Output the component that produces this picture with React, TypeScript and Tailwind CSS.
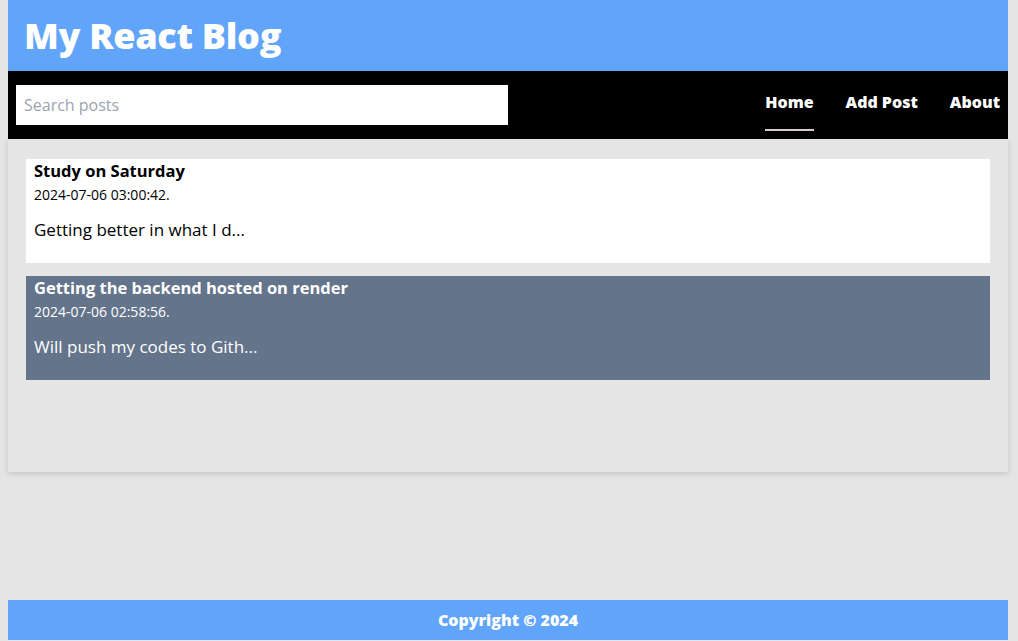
export default function App() {
  const posts = [
    { title: "Study on Saturday", date: "2024-07-06 03:00:42.", body: "Getting better in what I d...", dark: false },
    { title: "Getting the backend hosted on render", date: "2024-07-06 02:58:56.", body: "Will push my codes to Gith...", dark: true },
  ];
  return (
    <div className="h-[641px] bg-[#e5e5e5] pl-2 pr-[10px] flex flex-col" style={{ fontFamily: '"Open Sans", sans-serif' }}>
      <header className="h-[71px] bg-[#60a5fa] flex items-center px-4">
        <h1 className="text-[36px] font-extrabold text-white leading-none tracking-[-0.3px]">My React Blog</h1>
      </header>
      <nav className="h-[68px] bg-black flex items-center justify-between pl-2 pr-2">
        <input
          className="w-[492px] h-10 bg-white px-2 text-[16px] outline-none placeholder:text-[#9ca3af]"
          placeholder="Search posts"
        />
        <ul className="flex items-center gap-8 text-white font-extrabold text-[16px] h-full">
          <li className="relative h-full flex items-center">
            <span className="relative -top-[3px]">Home</span>
            <span className="absolute left-0 right-0 bottom-[8px] h-[2px] bg-[#d6cccc]" />
          </li>
          <li className="relative -top-[3px]">Add Post</li>
          <li className="relative -top-[3px]">About</li>
        </ul>
      </nav>
      <main className="h-[333px] bg-[#e5e5e5] shadow-[0_2px_6px_rgba(0,0,0,0.15)] pt-5 px-[18px] flex flex-col gap-[13px]">
        {posts.map((p) => (
          <article
            key={p.title}
            className={`h-[104px] px-2 ${p.dark ? "bg-[#64748b] text-white" : "bg-white text-black"}`}
          >
            <h2 className="text-[16.5px] font-bold leading-6">{p.title}</h2>
            <p className="text-[14px] leading-5 mt-[2px]">{p.date}</p>
            <p className="text-[17px] leading-6 mt-[13px]">{p.body}</p>
          </article>
        ))}
      </main>
      <div className="flex-1" />
      <footer className="h-10 bg-[#60a5fa] flex items-center justify-center text-white font-extrabold text-[16px] mb-[1px]">
        Copyright © 2024
      </footer>
    </div>
  );
}
